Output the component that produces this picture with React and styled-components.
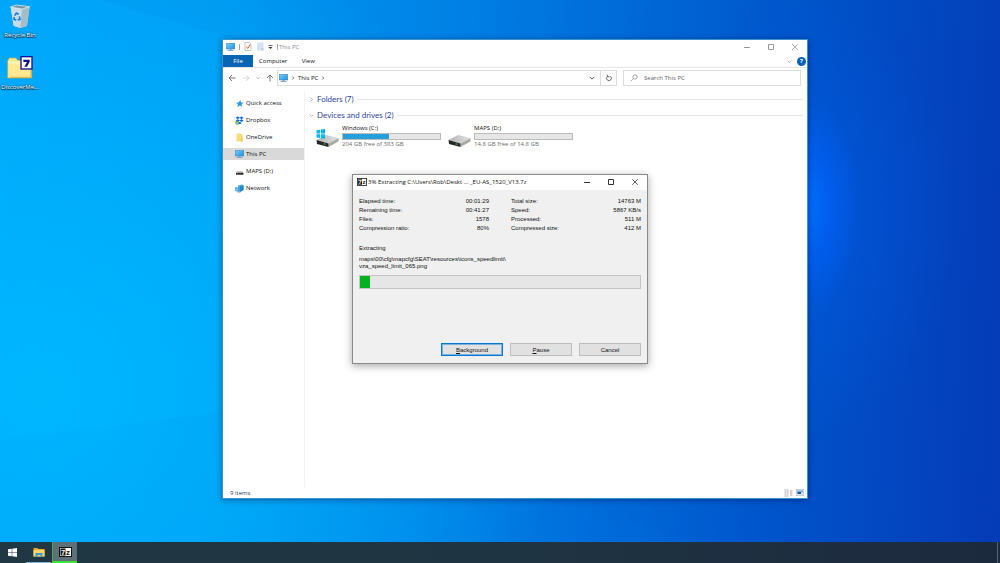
import React from "react";
import styled, { createGlobalStyle, css } from "styled-components";

const GlobalStyle = createGlobalStyle`
  *, *::before, *::after { box-sizing: border-box; }
  body { margin: 0; }
  body, button, input {
    font-family: "Open Sans", "Noto Sans", sans-serif;
    font-size: 6px;
    line-height: 8px;
    color: #111;
  }
  button { border: 0; padding: 0; background: none; }
  a { color: inherit; text-decoration: none; }
  svg { display: block; flex: none; }
`;

const Screen = styled.div`
  display: flex;
  flex-direction: column;
  height: 100vh;
  overflow: hidden;
`;

const Desktop = styled.main`
  position: relative;
  flex: 1;
  padding: 4px 0;
  background:
    radial-gradient(ellipse 56px 110px at 80.5% 38%, rgba(0, 112, 255, 0.95), rgba(0, 100, 255, 0.5) 50%, rgba(0, 90, 240, 0) 100%),
    radial-gradient(ellipse 150px 220px at 80.5% 40%, rgba(0, 96, 240, 0.4), rgba(0, 80, 220, 0) 100%),
    radial-gradient(ellipse 52% 90% at 4% 72%, rgba(0, 186, 255, 0.9), rgba(0, 180, 255, 0) 100%),
    linear-gradient(93deg, #00a2fa 0%, #009cf4 22%, #0086e8 42%, #006fdc 58%, #0056cc 76%, #0348c2 88%, #053bb6 100%);
`;

const Beams = styled.svg`
  position: absolute;
  inset: 0;
  width: 100%;
  height: 100%;
`;

const Shortcuts = styled.nav`
  position: relative;
  display: flex;
  flex-direction: column;
  gap: 13px;
  width: 40px;
`;

const Shortcut = styled.a`
  display: flex;
  flex-direction: column;
  align-items: center;
  gap: 3px;
  height: 39px;
  color: #fff;
  white-space: nowrap;
  text-shadow: 0 1px 1px #000, 0 0 2px #000;
`;

/* ---------- file explorer ---------- */

const Explorer = styled.section`
  position: absolute;
  top: 39px;
  right: 192px;
  bottom: 43px;
  left: 222px;
  display: flex;
  flex-direction: column;
  background: #fff;
  border: 1px solid #3c93cc;
  box-shadow: 0 1px 6px rgba(0, 10, 60, 0.45);
`;

const TitleBar = styled.header`
  display: flex;
  align-items: center;
  height: 15px;
  padding: 0 0 2px 3px;
  color: #8d8d8d;
`;

const QuickTools = styled.div`
  display: flex;
  align-items: center;
  gap: 4px;
  margin-right: 1px;
`;

const Divider = styled.span`
  width: 1px;
  height: 6px;
  background: #a8a8a8;
`;

const WindowControls = styled.div`
  display: flex;
  margin-left: auto;
`;

const WindowButton = styled.button`
  display: grid;
  place-items: center;
  width: 24px;
  height: 13px;
  color: ${(p) => (p.$active ? "#333" : "#999")};
`;

const Ribbon = styled.nav`
  display: flex;
  align-items: stretch;
  height: 13px;
  border-bottom: 1px solid #e4e5e6;
`;

const RibbonTab = styled.button`
  min-width: 30px;
  padding: 0 6px;
  ${(p) =>
    p.$primary &&
    css`
      background: #0a64b4;
      color: #fff;
    `}
`;

const RibbonEnd = styled.div`
  display: flex;
  align-items: center;
  gap: 5px;
  margin-left: auto;
  padding-right: 1px;
`;

const HelpButton = styled.button`
  width: 9px;
  height: 9px;
  border-radius: 50%;
  background: #0a62b8;
  color: #fff;
  font-weight: 700;
  line-height: 9px;
`;

const NavigationRow = styled.div`
  display: flex;
  align-items: center;
  gap: 6px;
  height: 20px;
  padding: 0 6px 0 5px;
`;

const HistoryButtons = styled.div`
  display: flex;
  align-items: center;
  justify-content: space-between;
  width: 46px;
`;

const AddressGroup = styled.div`
  display: flex;
  flex: 1;
  gap: 6px;
`;

const AddressBar = styled.div`
  display: flex;
  align-items: center;
  flex: 1;
  gap: 3px;
  height: 16px;
  margin-left: -3px;
  padding-left: 1px;
  border: 1px solid #dcdcdc;
`;

const AddressEnd = styled.div`
  display: flex;
  align-self: stretch;
  margin-left: auto;
`;

const AddressButton = styled.button`
  display: grid;
  place-items: center;
  width: 16px;
  ${(p) => p.$boxed && "border-left: 1px solid #dcdcdc;"}
`;

const SearchBox = styled.label`
  display: flex;
  align-items: center;
  gap: 6px;
  width: 178px;
  height: 16px;
  padding: 0 6px;
  border: 1px solid #dcdcdc;
`;

const SearchInput = styled.input`
  flex: 1;
  min-width: 0;
  padding: 0;
  border: 0;
  outline: 0;
  background: none;
  &::placeholder { color: #606060; opacity: 1; }
`;

const ExplorerBody = styled.div`
  display: flex;
  flex: 1;
  padding-top: 3px;
`;

const Sidebar = styled.nav`
  display: flex;
  flex-direction: column;
  gap: 5px;
  width: 81px;
  padding-top: 6px;
  margin-right: 5px;
  box-shadow: 1px 0 #f3f3f3;
`;

const SidebarLink = styled.a`
  display: flex;
  align-items: center;
  gap: 2px;
  height: 12px;
  padding-left: 12px;
  background: ${(p) => (p.$current ? "#d9d9d9" : "transparent")};
`;

const Files = styled.div`
  flex: 1;
  padding-right: 4px;
`;

const GroupHeading = styled.h2`
  display: flex;
  align-items: center;
  gap: 3px;
  height: 16px;
  margin: 0;
  color: #32439c;
  font-family: Lato, "Open Sans", sans-serif;
  font-size: 8px;
  font-weight: 400;
  line-height: 12px;
  &::after {
    content: "";
    flex: 1;
    height: 1px;
    background: #e5e5e5;
  }
`;

const DriveList = styled.div`
  display: flex;
  gap: 8px;
  padding: 1px 0 0 7px;
`;

const Drive = styled.a`
  display: grid;
  grid-template-columns: 23px 99px;
  align-items: end;
  column-gap: 3px;
  width: 124px;
`;

const DriveInfo = styled.div`
  display: grid;
  color: #6e6e6e;
`;

const DriveName = styled.span`
  color: #111;
  line-height: 9px;
`;

const CapacityBar = styled.div`
  height: 7px;
  border: 1px solid #bcbcbc;
  background: #e6e6e6;
`;

const CapacityFill = styled.div`
  height: 100%;
  background: #26a0da;
`;

const StatusBar = styled.footer`
  display: flex;
  align-items: center;
  justify-content: space-between;
  height: 11px;
  padding: 0 3px 0 7px;
  color: #1e395b;
`;

const ViewButtons = styled.div`
  display: flex;
  gap: 3px;
`;

/* ---------- extraction dialog ---------- */

const Dialog = styled.section`
  position: absolute;
  top: 174px;
  left: calc(50% - 148px);
  width: 296px;
  background: #f0f0f0;
  border: 1px solid #8a8a8a;
  box-shadow: 0 2px 8px rgba(0, 0, 0, 0.35);
  font-family: "Liberation Sans", Arial, sans-serif;
`;

const DialogTitle = styled.header`
  display: flex;
  align-items: center;
  gap: 1px;
  height: 15px;
  padding: 0 0 1px 4px;
  background: #fff;
  font-family: "Open Sans", "Noto Sans", sans-serif;
`;

const DialogBody = styled.div`
  padding: 7px 6px;
`;

const Statistics = styled.div`
  display: grid;
  grid-template-columns: 1fr 1fr;
  gap: 22px;
`;

const StatList = styled.dl`
  margin: 0;
`;

const Stat = styled.div`
  display: flex;
  justify-content: space-between;
  line-height: 9px;
  dd { margin: 0; }
`;

const Operation = styled.p`
  margin: 11px 0 4px;
`;

const FilePath = styled.p`
  margin: 0;
  line-height: 7px;
`;

const ProgressTrack = styled.div`
  height: 14px;
  margin: 5px 0 54px;
  border: 1px solid #c4c4c4;
  background: #e6e6e6;
`;

const ProgressFill = styled.div`
  height: 100%;
  background: #06b025;
`;

const DialogButtons = styled.div`
  display: flex;
  justify-content: flex-end;
  gap: 7px;
`;

const PushButton = styled.button`
  width: 62px;
  height: 13px;
  border: 1px solid #bdbdbd;
  background: #e1e1e1;
  font-family: inherit;
  ${(p) =>
    p.$default &&
    css`
      border-color: #0078d7;
      box-shadow: inset 0 0 0 1px rgba(0, 120, 215, 0.45);
    `}
`;

/* ---------- taskbar ---------- */

const Taskbar = styled.footer`
  display: flex;
  height: 21px;
  background: linear-gradient(90deg, #203843, #1f3442 50%, #1c2a3e);
  &::after {
    content: "";
    width: 1px;
    margin: 0 2px 0 auto;
    background: #56616f;
  }
`;

const TaskButton = styled.button`
  display: grid;
  place-items: center;
  width: 25px;
  margin-right: 1px;
  border-bottom: 1px solid transparent;
  ${(p) => p.$running && "border-bottom-color: #76b9ed;"}
  ${(p) =>
    p.$current &&
    css`
      background: #5d7075;
      border-left: 1px solid #4da653;
      border-bottom: 2px solid #3fe03a;
    `}
`;

/* ---------- icons ---------- */

const Glyph = ({ d, size = 8, stroke = "currentColor", width = 0.8 }) => (
  <svg width={size} height={size} viewBox="0 0 8 8" fill="none" stroke={stroke} strokeWidth={width}>
    <path d={d} />
  </svg>
);

const MINIMIZE = "M1 4.5H7";
const MAXIMIZE = "M1.5 1.5H6.5V6.5H1.5Z";
const CLOSE = "M1.2 1.2L6.8 6.8M6.8 1.2L1.2 6.8";
const CHEVRON_DOWN = "M1 2.5L4 5.5L7 2.5";
const CHEVRON_RIGHT = "M2.5 1L5.5 4L2.5 7";

const ComputerIcon = ({ width = 9 }) => (
  <svg width={width} height="8" viewBox="0 0 18 16">
    <defs>
      <linearGradient id="screen" x1="0" y1="0" x2="1" y2="1">
        <stop offset="0" stopColor="#7fd0fa" />
        <stop offset="1" stopColor="#1590e0" />
      </linearGradient>
    </defs>
    <rect x="0.5" y="0.5" width="17" height="11.5" fill="url(#screen)" stroke="#3c86b8" />
    <path d="M7 12h4v2H7z" fill="#8aa4b4" />
    <path d="M3 14h12v1.6H3z" fill="#5f9cc0" />
  </svg>
);

const CheckPageIcon = () => (
  <svg width="8" height="9" viewBox="0 0 16 18">
    <path d="M2 1h9l3 3v13H2z" fill="#fff" stroke="#8c8c8c" />
    <path d="M4.5 9l3 4 5-8" fill="none" stroke="#e0622c" strokeWidth="2" />
  </svg>
);

const BlankPageIcon = () => (
  <svg width="8" height="9" viewBox="0 0 16 18">
    <path d="M2 1h13v16H2z" fill="#d5e1f5" />
    <path d="M11 12h4v5h-4z" fill="#b9caea" />
  </svg>
);

const CustomizeIcon = () => (
  <svg width="5" height="6" viewBox="0 0 10 12">
    <path d="M1 2h8v1.6H1zM1 6h8L5 10z" fill="#333" />
  </svg>
);

const RefreshIcon = () => (
  <svg width="8" height="8" viewBox="0 0 14 14" fill="none" stroke="#555" strokeWidth="1.5">
    <path d="M4 4.5A4.2 4.2 0 1 0 9.5 4.2M4 1V4.8H8" />
  </svg>
);

const SearchIcon = () => (
  <svg width="8" height="8" viewBox="0 0 14 14" fill="none" stroke="#777" strokeWidth="1.1">
    <circle cx="8.8" cy="5.2" r="3.8" />
    <path d="M6 8L1.5 12.5" />
  </svg>
);

const StarIcon = () => (
  <svg width="9" height="9" viewBox="0 0 18 18">
    <path d="M10.5 2l1.6 5 5 .6-4 3 1 5.4-4.2-3L4.5 16l1.5-5.5L2 7l5.4-.2z" fill="#2b9be0" />
  </svg>
);

const DropboxIcon = () => (
  <svg width="9" height="9" viewBox="0 0 18 18">
    <path d="M5.5 1l4 2.7-4 2.7-4-2.7zM13 1l4 2.7-4 2.7-4-2.7zM5.5 6.5l4 2.7-4 2.7-4-2.7zM13 6.5l4 2.7-4 2.7-4-2.7zM9.5 11.5l4 2.5-4 2.7-4-2.7z" fill="#0a66e0" />
    <circle cx="4.5" cy="13.5" r="4" fill="#4fb054" />
    <path d="M2.5 13.5l1.5 1.7 2.7-3.4" fill="none" stroke="#fff" strokeWidth="1.2" />
  </svg>
);

const FolderIcon = () => (
  <svg width="9" height="9" viewBox="0 0 18 18">
    <path d="M3 1h9l3 2v14H3z" fill="#fbdc7c" />
    <path d="M12 9h3v8h-3z" fill="#efc04c" />
  </svg>
);

const RemovableIcon = () => (
  <svg width="9" height="9" viewBox="0 0 18 18">
    <path d="M4 8h11l2 4H2z" fill="#c9c9c9" />
    <path d="M2 11.5h15v4H2z" fill="#303030" />
    <path d="M4 13h2v1H4z" fill="#3bd046" />
  </svg>
);

const NetworkIcon = () => (
  <svg width="9" height="9" viewBox="0 0 18 18">
    <path d="M6 3l8-2 3 2v9l-7 4-4-3z" fill="#4aa9e4" />
    <path d="M10 5l7-2v9l-7 4z" fill="#2387cd" />
    <path d="M1 7l7 1v7l-7-1.5z" fill="#72c3f1" stroke="#2a78b0" />
    <path d="M4 16l7 1" stroke="#55869f" />
  </svg>
);

const DriveIcon = ({ windows }) => (
  <svg width="23" height="20" viewBox="0 0 46 40">
    <defs>
      <linearGradient id="lid" x1="0" y1="0" x2="1" y2="0">
        <stop offset="0" stopColor="#b4b4b4" />
        <stop offset="1" stopColor="#e2e2e2" />
      </linearGradient>
    </defs>
    <path d="M1 24L20 14L45 20L25 31Z" fill="url(#lid)" />
    <path d="M25 31L45 20V27L25 38Z" fill="#a9a9a9" />
    <path d="M1 24L25 31V38L2 32Z" fill="#262626" />
    <path d="M15 30.5l4 1.2v2l-4-1.2z" fill="#42d04c" />
    {windows && (
      <path d="M1 4.5L8.5 3.5V11H1ZM10 3.2L18 2V11H10ZM1 12.5H8.5V20L1 19ZM10 12.5H18V21.5L10 20.3Z" fill="#08b5ee" />
    )}
  </svg>
);

const DetailsIcon = () => (
  <svg width="9" height="8" viewBox="0 0 18 16">
    <path d="M1 1h3v2H1zM1 5h3v2H1zM1 9h3v2H1zM1 13h3v2H1zM5 1h4v2H5zM5 5h4v2H5zM5 9h4v2H5zM5 13h4v2H5zM12 3h5v2h-5zM12 7h5v2h-5zM12 11h5v2h-5z" fill="#aaa3a6" />
  </svg>
);

const TilesIcon = () => (
  <svg width="8" height="7" viewBox="0 0 16 14">
    <rect x="0.5" y="0.5" width="15" height="13" fill="#dbe5f0" stroke="#a4b9cc" />
    <path d="M2 3h12v4H2z" fill="#7eaede" />
    <path d="M3 6h7v4H3z" fill="#1c5a94" />
  </svg>
);

const SevenZipIcon = ({ width = 10, height = 8 }) => (
  <svg width={width} height={height} viewBox="0 0 26 20">
    <rect x="1" y="1" width="24" height="18" fill="#fff" stroke="#111" strokeWidth="2" />
    <path d="M3 3h10v14H3z" fill="#111" />
    <text x="4" y="15.5" fontSize="15" fontWeight="700" fontFamily="Liberation Sans" fill="#fff">7</text>
    <text x="14" y="15.5" fontSize="16" fontWeight="700" fontFamily="Liberation Sans" fill="#111">z</text>
  </svg>
);

const RecycleBinIcon = () => (
  <svg width="22" height="24" viewBox="0 0 66 72">
    <path d="M5 9L22 3L62 8L54 66L34 72L14 65Z" fill="#b6d2e4" opacity="0.9" />
    <path d="M5 9L39 15L62 8L54 66L34 72L14 65Z" fill="#a5bccb" />
    <path d="M5 9L39 15L34 72L14 65Z" fill="#c9dbe5" />
    <path d="M5 9L22 3L62 8L39 15Z" fill="#7796a8" stroke="#edf5f9" strokeWidth="2" />
    <g fill="none" stroke="#1680d2" strokeWidth="5">
      <path d="M17 35L22 27L29 31" />
      <path d="M31 37L33 46L26 48" />
      <path d="M22 49L15 46L16 39" />
    </g>
  </svg>
);

const ArchiveFolderIcon = () => (
  <svg width="26" height="24" viewBox="0 0 78 72">
    <path d="M2 14L7 6H26L32 13H74V66H2Z" fill="#ffe990" stroke="#c9a63b" strokeWidth="2" />
    <path d="M4 16H72V23H4Z" fill="#fff5b8" />
    <path d="M72 38V64H10" fill="none" stroke="#d8b24a" strokeWidth="3" />
    <rect x="42" y="2" width="33" height="37" fill="#fff" stroke="#11118c" strokeWidth="4" />
    <path d="M49 11H68V17L60 32H52L60 18H49Z" fill="#11118c" />
  </svg>
);

const WindowsLogo = () => (
  <svg width="9" height="9" viewBox="0 0 18 18">
    <path d="M0 2.5L7.5 1.5V8.5H0ZM8.5 1.3L18 0V8.5H8.5ZM0 9.5H7.5V16.5L0 15.5ZM8.5 9.5H18V18L8.5 16.7Z" fill="#fff" />
  </svg>
);

const FileExplorerIcon = () => (
  <svg width="12" height="11" viewBox="0 0 24 22">
    <path d="M1 2h8l2 2h12v15H1z" fill="#e9a92b" />
    <path d="M1 6h22v13H1z" fill="#fbd667" />
    <path d="M5 12h14v8h-4v-4H9v4H5z" fill="#3c98d8" />
  </svg>
);

/* ---------- content ---------- */

const PLACES = [
  { name: "Quick access", icon: StarIcon },
  { name: "Dropbox", icon: DropboxIcon },
  { name: "OneDrive", icon: FolderIcon },
  { name: "This PC", icon: ComputerIcon, current: true },
  { name: "MAPS (D:)", icon: RemovableIcon },
  { name: "Network", icon: NetworkIcon },
];

const DRIVES = [
  { name: "Windows (C:)", space: "204 GB free of 383 GB", used: 47, windows: true },
  { name: "MAPS (D:)", space: "14.8 GB free of 14.8 GB", used: 0 },
];

const STATISTICS = [
  [
    ["Elapsed time:", "00:01:29"],
    ["Remaining time:", "00:41:27"],
    ["Files:", "1578"],
    ["Compression ratio:", "80%"],
  ],
  [
    ["Total size:", "14763 M"],
    ["Speed:", "5867 KB/s"],
    ["Processed:", "511 M"],
    ["Compressed size:", "412 M"],
  ],
];

const Controls = ({ active }) => (
  <WindowControls>
    <WindowButton $active={active} aria-label="Minimize"><Glyph d={MINIMIZE} width={1} /></WindowButton>
    <WindowButton $active={active} aria-label="Maximize"><Glyph d={MAXIMIZE} width={1} /></WindowButton>
    <WindowButton $active={active} aria-label="Close"><Glyph d={CLOSE} width={0.8} /></WindowButton>
  </WindowControls>
);

const ExplorerWindow = () => (
  <Explorer aria-label="This PC">
    <TitleBar>
      <QuickTools>
        <ComputerIcon />
        <Divider />
        <CheckPageIcon />
        <BlankPageIcon />
        <CustomizeIcon />
        <Divider />
      </QuickTools>
      This PC
      <Controls />
    </TitleBar>
    <Ribbon>
      <RibbonTab $primary>File</RibbonTab>
      <RibbonTab>Computer</RibbonTab>
      <RibbonTab>View</RibbonTab>
      <RibbonEnd>
        <Glyph d={CHEVRON_DOWN} size={5} stroke="#888" width={1} />
        <HelpButton aria-label="Help">?</HelpButton>
      </RibbonEnd>
    </Ribbon>
    <NavigationRow>
      <HistoryButtons>
        <button aria-label="Back"><Glyph d="M7.5 4H1M4 1L1 4L4 7" stroke="#555" /></button>
        <button aria-label="Forward"><Glyph d="M0.5 4H7M4 1L7 4L4 7" stroke="#ccc" /></button>
        <button aria-label="Recent locations"><Glyph d={CHEVRON_DOWN} size={4} stroke="#777" width={1.2} /></button>
        <button aria-label="Up"><Glyph d="M4 7.5V1M1 4L4 1L7 4" stroke="#555" /></button>
      </HistoryButtons>
      <AddressGroup>
        <AddressBar>
          <ComputerIcon />
          <Glyph d={CHEVRON_RIGHT} size={4} stroke="#444" width={1.4} />
          <a href="#this-pc">This PC</a>
          <Glyph d={CHEVRON_RIGHT} size={4} stroke="#444" width={1.4} />
          <AddressEnd>
            <AddressButton aria-label="Previous locations"><Glyph d={CHEVRON_DOWN} size={6} stroke="#444" width={1.2} /></AddressButton>
            <AddressButton $boxed aria-label="Refresh"><RefreshIcon /></AddressButton>
          </AddressEnd>
        </AddressBar>
        <SearchBox>
          <SearchIcon />
          <SearchInput type="search" placeholder="Search This PC" aria-label="Search This PC" />
        </SearchBox>
      </AddressGroup>
    </NavigationRow>
    <ExplorerBody>
      <Sidebar>
        {PLACES.map(({ name, icon: Icon, current }) => (
          <SidebarLink key={name} href={`#${name}`} $current={current}>
            <Icon />
            {name}
          </SidebarLink>
        ))}
      </Sidebar>
      <Files>
        <GroupHeading><Glyph d={CHEVRON_RIGHT} size={5} stroke="#888" width={1} />Folders (7)</GroupHeading>
        <GroupHeading><Glyph d={CHEVRON_DOWN} size={5} stroke="#888" width={1} />Devices and drives (2)</GroupHeading>
        <DriveList>
          {DRIVES.map((drive) => (
            <Drive key={drive.name} href={`#${drive.name}`}>
              <DriveIcon windows={drive.windows} />
              <DriveInfo>
                <DriveName>{drive.name}</DriveName>
                <CapacityBar>
                  <CapacityFill style={{ width: `${drive.used}%` }} />
                </CapacityBar>
                {drive.space}
              </DriveInfo>
            </Drive>
          ))}
        </DriveList>
      </Files>
    </ExplorerBody>
    <StatusBar>
      9 items
      <ViewButtons>
        <button aria-label="Details"><DetailsIcon /></button>
        <button aria-label="Large icons"><TilesIcon /></button>
      </ViewButtons>
    </StatusBar>
  </Explorer>
);

const ExtractDialog = () => (
  <Dialog role="dialog" aria-label="Extracting">
    <DialogTitle>
      <SevenZipIcon />
      3% Extracting C:\Users\Rob\Deskt ... _EU-AS_1520_V13.7z
      <Controls active />
    </DialogTitle>
    <DialogBody>
      <Statistics>
        {STATISTICS.map((list) => (
          <StatList key={list[0][0]}>
            {list.map(([label, value]) => (
              <Stat key={label}>
                <dt>{label}</dt>
                <dd>{value}</dd>
              </Stat>
            ))}
          </StatList>
        ))}
      </Statistics>
      <Operation>Extracting</Operation>
      <FilePath>
        maps\00\cfg\mapcfg\SEAT\resources\icons_speedlimit\
        <br />
        vza_speed_limit_065.png
      </FilePath>
      <ProgressTrack role="progressbar" aria-valuenow={3}>
        <ProgressFill style={{ width: "3.4%" }} />
      </ProgressTrack>
      <DialogButtons>
        <PushButton $default><u>B</u>ackground</PushButton>
        <PushButton><u>P</u>ause</PushButton>
        <PushButton>Cancel</PushButton>
      </DialogButtons>
    </DialogBody>
  </Dialog>
);

export default function App() {
  return (
    <>
      <GlobalStyle />
      <Screen>
        <Desktop>
          <Beams viewBox="0 0 1000 542" preserveAspectRatio="none" aria-hidden="true">
            <path d="M100 0L240 40H1000V0Z" fill="#0060d0" opacity="0.06" />
            <path d="M0 440L222 412L700 542H0Z" fill="#0090e8" opacity="0.06" />
          </Beams>
          <Shortcuts>
            <Shortcut href="#recycle-bin"><RecycleBinIcon />Recycle Bin</Shortcut>
            <Shortcut href="#discover-media"><ArchiveFolderIcon />DiscoverMe...</Shortcut>
          </Shortcuts>
          <ExplorerWindow />
          <ExtractDialog />
        </Desktop>
        <Taskbar>
          <TaskButton aria-label="Start"><WindowsLogo /></TaskButton>
          <TaskButton $running aria-label="File Explorer"><FileExplorerIcon /></TaskButton>
          <TaskButton $current aria-label="7-Zip"><SevenZipIcon width={13} height={10} /></TaskButton>
        </Taskbar>
      </Screen>
    </>
  );
}
